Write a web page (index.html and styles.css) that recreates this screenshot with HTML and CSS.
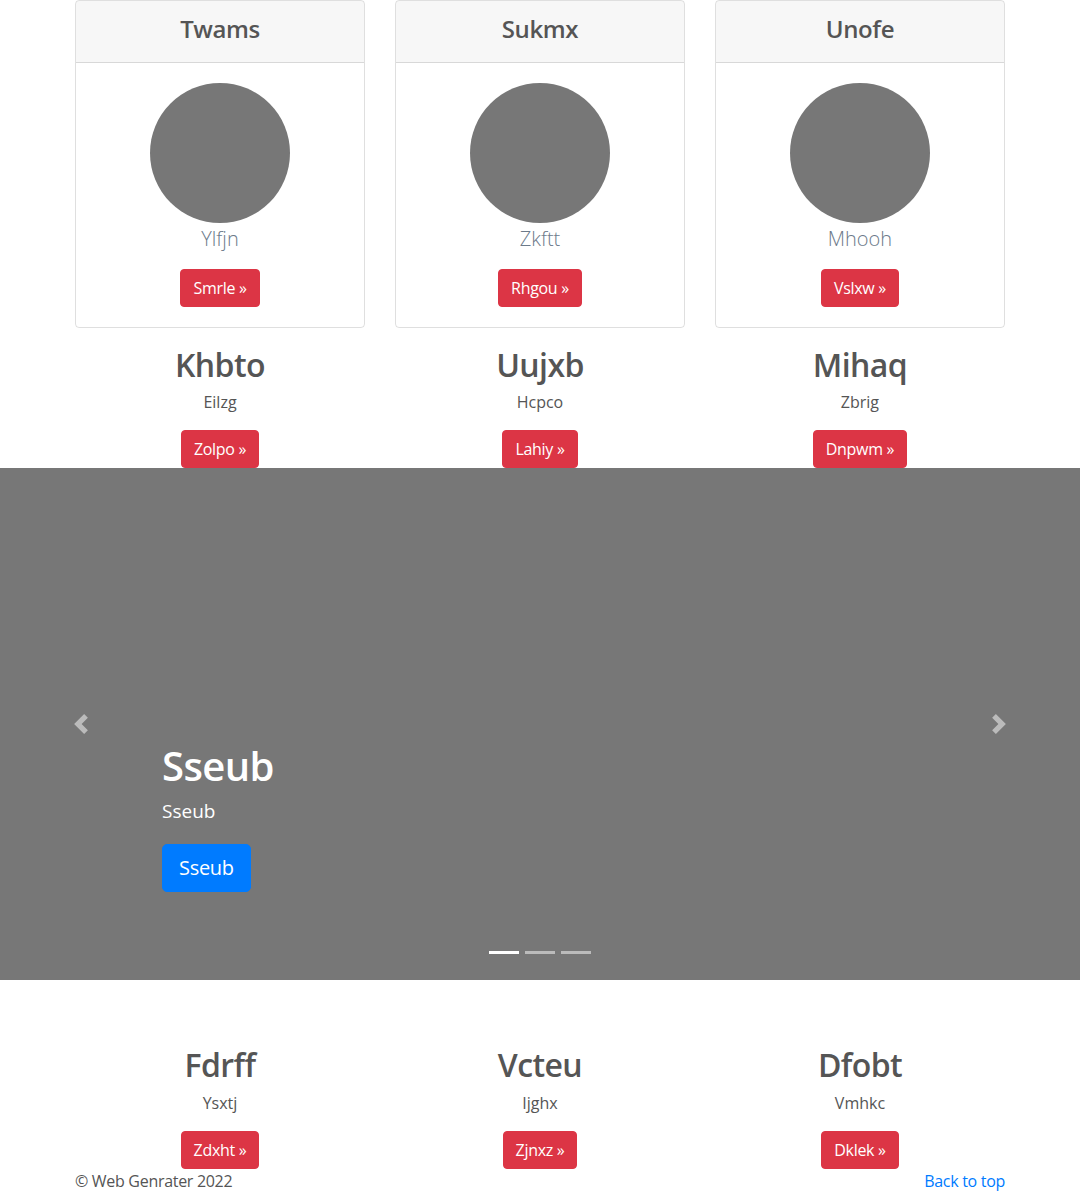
FILE: index.html
```html
<!DOCTYPE html>
<html lang="en">
<head>
<meta charset="utf-8">
<title>Web Genrater</title>
<link rel="stylesheet" href="styles.css">
</head>
<body>
<main>
  <div class="container">
    <div class="row">
      <div class="col">
        <div class="card">
          <div class="card-header"><h4 class="card-title">Twams</h4></div>
          <div class="card-body">
            <svg class="avatar" width="140" height="140" viewBox="0 0 140 140"><circle cx="70" cy="70" r="70" fill="#777"/></svg>
            <p class="lead">Ylfjn</p>
            <a class="btn btn-danger" href="#">Smrle &raquo;</a>
          </div>
        </div>
        <h2 class="feature-title">Khbto</h2>
        <p class="feature-text">Eilzg</p>
        <p class="feature-action"><a class="btn btn-danger" href="#">Zolpo &raquo;</a></p>
      </div>
      <div class="col">
        <div class="card">
          <div class="card-header"><h4 class="card-title">Sukmx</h4></div>
          <div class="card-body">
            <svg class="avatar" width="140" height="140" viewBox="0 0 140 140"><circle cx="70" cy="70" r="70" fill="#777"/></svg>
            <p class="lead">Zkftt</p>
            <a class="btn btn-danger" href="#">Rhgou &raquo;</a>
          </div>
        </div>
        <h2 class="feature-title">Uujxb</h2>
        <p class="feature-text">Hcpco</p>
        <p class="feature-action"><a class="btn btn-danger" href="#">Lahiy &raquo;</a></p>
      </div>
      <div class="col">
        <div class="card">
          <div class="card-header"><h4 class="card-title">Unofe</h4></div>
          <div class="card-body">
            <svg class="avatar" width="140" height="140" viewBox="0 0 140 140"><circle cx="70" cy="70" r="70" fill="#777"/></svg>
            <p class="lead">Mhooh</p>
            <a class="btn btn-danger" href="#">Vslxw &raquo;</a>
          </div>
        </div>
        <h2 class="feature-title">Mihaq</h2>
        <p class="feature-text">Zbrig</p>
        <p class="feature-action"><a class="btn btn-danger" href="#">Dnpwm &raquo;</a></p>
      </div>
    </div>
  </div>

  <div class="carousel">
    <ol class="carousel-indicators">
      <li class="active"></li>
      <li></li>
      <li></li>
    </ol>
    <div class="carousel-item">
      <div class="carousel-caption">
        <h1 class="caption-title">Sseub</h1>
        <p class="caption-text">Sseub</p>
        <p class="caption-action"><a class="btn btn-lg btn-primary" href="#">Sseub</a></p>
      </div>
    </div>
    <a class="carousel-control carousel-control-prev" href="#">
      <svg width="20" height="20" viewBox="0 0 8 8"><path fill="#fff" d="M5.25 0l-4 4 4 4 1.5-1.5L4.25 4l2.5-2.5L5.25 0z"/></svg>
    </a>
    <a class="carousel-control carousel-control-next" href="#">
      <svg width="20" height="20" viewBox="0 0 8 8"><path fill="#fff" d="M2.75 0l-1.5 1.5L3.75 4l-2.5 2.5L2.75 8l4-4-4-4z"/></svg>
    </a>
  </div>

  <div class="container">
    <div class="row">
      <div class="col">
        <h2 class="feature-title">Fdrff</h2>
        <p class="feature-text">Ysxtj</p>
        <p class="feature-action"><a class="btn btn-danger" href="#">Zdxht &raquo;</a></p>
      </div>
      <div class="col">
        <h2 class="feature-title">Vcteu</h2>
        <p class="feature-text">Ijghx</p>
        <p class="feature-action"><a class="btn btn-danger" href="#">Zjnxz &raquo;</a></p>
      </div>
      <div class="col">
        <h2 class="feature-title">Dfobt</h2>
        <p class="feature-text">Vmhkc</p>
        <p class="feature-action"><a class="btn btn-danger" href="#">Dklek &raquo;</a></p>
      </div>
    </div>
  </div>

  <footer class="container footer">
    <p class="footer-copy">&copy; Web Genrater 2022</p>
    <p class="footer-top"><a href="#">Back to top</a></p>
  </footer>
</main>
</body>
</html>
```
FILE: styles.css
```css
* { box-sizing: border-box; }

html, body {
  margin: 0;
  padding: 0;
}

body {
  font-family: "Open Sans", "Noto Sans", "Liberation Sans", sans-serif;
  font-size: 16px;
  line-height: 1.5;
  color: #555;
  background: #fff;
}

a { color: #007bff; text-decoration: none; }

.container {
  width: 960px;
  margin: 0 auto;
  padding: 0 15px;
}

.row {
  display: flex;
  margin: 0 -15px;
}

.col {
  flex: 0 0 33.3333%;
  padding: 0 15px;
  text-align: center;
}

.card {
  border: 1px solid rgba(0,0,0,.125);
  border-radius: 4px;
  margin-bottom: 16px;
  overflow: hidden;
}

.card-header {
  background: rgba(0,0,0,.03);
  border-bottom: 1px solid rgba(0,0,0,.125);
  padding: 12px 20px;
}

.card-title {
  margin: 0 0 6px;
  padding-top: 2px;
  font-size: 24px;
  line-height: 1.2;
  font-weight: 600;
  letter-spacing: -0.4px;
  color: #555;
}

.card-body {
  padding: 20px;
}

.avatar {
  display: block;
  margin: 0 auto;
}

.lead {
  margin: 0 0 16px;
  padding-top: 1px;
  height: 30px;
  font-size: 20px;
  font-weight: 300;
  color: #6c7a8a;
}

.btn {
  display: inline-block;
  padding: 6px 12px;
  font-size: 16px;
  line-height: 1.5;
  border: 1px solid transparent;
  border-radius: 4px;
  color: #fff;
  font-weight: 400;
  letter-spacing: -0.3px;
}

.btn-danger { background: #dc3545; border-color: #dc3545; }
.btn-primary { background: #007bff; border-color: #007bff; }

.btn-lg {
  padding: 8px 16px;
  font-size: 20px;
  border-radius: 5px;
}

.feature-title {
  margin: 0 0 6px;
  padding-top: 2px;
  font-size: 32px;
  line-height: 1.2;
  font-weight: 600;
  letter-spacing: -0.6px;
  color: #555;
}

.feature-text {
  margin: 0 0 16px;
  color: #555;
}

.feature-action { margin: 0; }

.carousel {
  position: relative;
  height: 512px;
  background: #777;
  margin-bottom: 64px;
}

.carousel-item {
  position: relative;
  height: 100%;
}

.carousel-caption {
  position: absolute;
  left: 15%;
  right: 15%;
  bottom: 48px;
  padding: 20px 0;
  color: #fff;
  text-align: left;
  z-index: 10;
}

.caption-title {
  margin: 0 0 6px;
  font-size: 40px;
  line-height: 1.2;
  font-weight: 600;
  letter-spacing: -0.6px;
}

.caption-text {
  margin: 0 0 18px;
  font-size: 19px;
  line-height: 30px;
}

.caption-action { margin: 0 0 20px; }

.carousel-indicators {
  position: absolute;
  left: 0;
  right: 0;
  bottom: 0;
  margin: 0 15% 16px;
  padding: 0;
  list-style: none;
  display: flex;
  justify-content: center;
  z-index: 15;
}

.carousel-indicators li {
  box-sizing: content-box;
  width: 30px;
  height: 3px;
  margin: 0 3px;
  background: #fff;
  background-clip: padding-box;
  border-top: 10px solid transparent;
  border-bottom: 10px solid transparent;
  opacity: .5;
}

.carousel-indicators li.active { opacity: 1; }

.carousel-control {
  position: absolute;
  top: 0;
  bottom: 0;
  width: 15%;
  display: flex;
  align-items: center;
  justify-content: center;
  opacity: .5;
  z-index: 5;
}

.carousel-control svg { display: block; }

.carousel-control-prev { left: 0; }
.carousel-control-next { right: 0; }

.footer {
  display: flex;
  justify-content: space-between;
  letter-spacing: -0.3px;
}

.footer p { margin: 0 0 16px; }
```
